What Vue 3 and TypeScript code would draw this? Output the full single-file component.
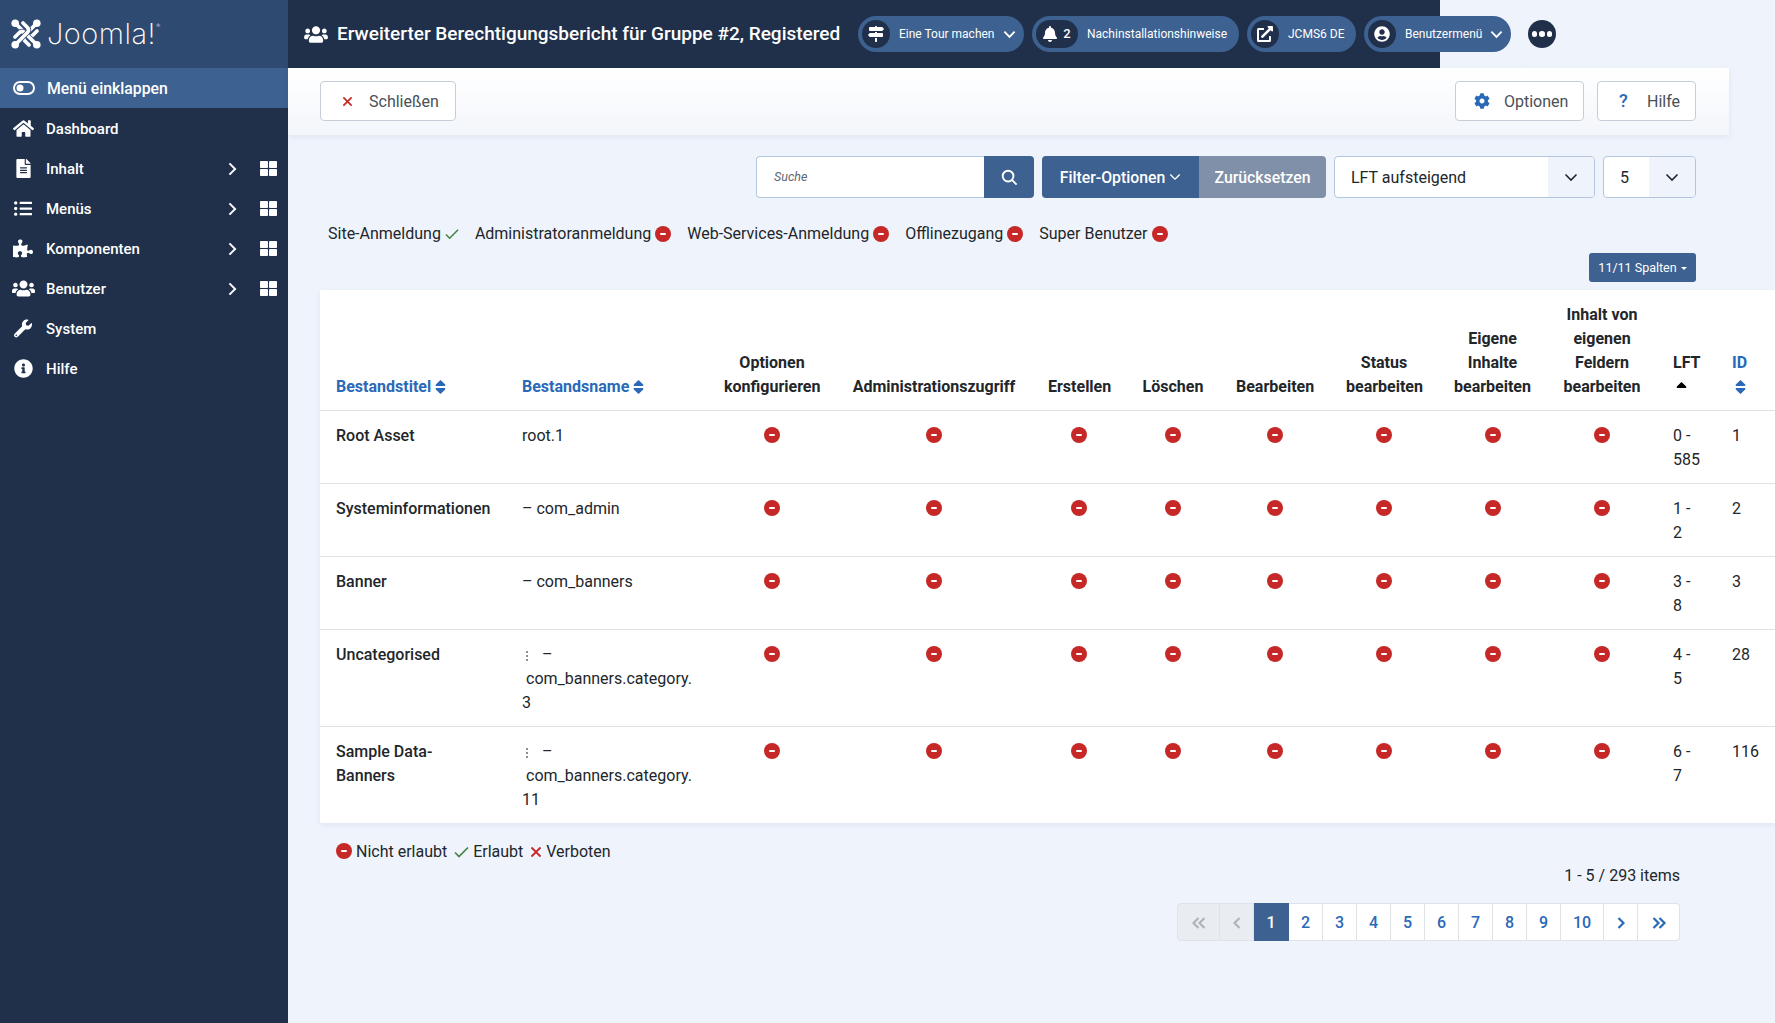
<script setup lang="ts">
const P = {
  users: 'M96 224c35.3 0 64-28.7 64-64s-28.7-64-64-64-64 28.7-64 64 28.7 64 64 64zm448 0c35.3 0 64-28.7 64-64s-28.7-64-64-64-64 28.7-64 64 28.7 64 64 64zm32 32h-64c-17.6 0-33.5 7.1-45.1 18.6 40.3 22.1 68.9 62 75.1 109.4h66c17.7 0 32-14.3 32-32v-32c0-35.3-28.7-64-64-64zm-256 0c61.9 0 112-50.1 112-112S381.9 32 320 32 208 82.1 208 144s50.1 112 112 112zm76.8 32h-8.3c-20.8 10-43.9 16-68.5 16s-47.6-6-68.5-16h-8.3C179.6 288 128 339.6 128 403.2V432c0 26.5 21.5 48 48 48h288c26.5 0 48-21.5 48-48v-28.8c0-63.6-51.6-115.2-115.2-115.2zm-223.7-13.4C161.5 263.1 145.6 256 128 256H64c-35.3 0-64 28.7-64 64v32c0 17.7 14.3 32 32 32h65.9c6.3-47.4 34.9-87.3 75.2-109.4z',
  home: 'M280.37 148.26L96 300.11V464a16 16 0 0 0 16 16l112.06-.29a16 16 0 0 0 15.92-16V368a16 16 0 0 1 16-16h64a16 16 0 0 1 16 16v95.64a16 16 0 0 0 16 16.05L464 480a16 16 0 0 0 16-16V300L295.67 148.26a12.19 12.19 0 0 0-15.3 0zM571.6 251.47L488 182.56V44.05a12 12 0 0 0-12-12h-56a12 12 0 0 0-12 12v72.61L318.47 43a48 48 0 0 0-61 0L4.34 251.47a12 12 0 0 0-1.6 16.9l25.5 31A12 12 0 0 0 45.15 301l235.22-193.74a12.19 12.19 0 0 1 15.3 0L530.9 301a12 12 0 0 0 16.9-1.6l25.5-31a12 12 0 0 0-1.7-16.93z',
  file: 'M224 136V0H24C10.7 0 0 10.7 0 24v464c0 13.3 10.7 24 24 24h336c13.3 0 24-10.7 24-24V160H248c-13.2 0-24-10.8-24-24zm64 236c0 6.6-5.4 12-12 12H108c-6.6 0-12-5.4-12-12v-8c0-6.6 5.4-12 12-12h168c6.6 0 12 5.4 12 12v8zm0-64c0 6.6-5.4 12-12 12H108c-6.6 0-12-5.4-12-12v-8c0-6.6 5.4-12 12-12h168c6.6 0 12 5.4 12 12v8zm0-72v8c0 6.6-5.4 12-12 12H108c-6.6 0-12-5.4-12-12v-8c0-6.6 5.4-12 12-12h168c6.6 0 12 5.4 12 12zm96-114.1v6.1H256V0h6.1c6.4 0 12.5 2.5 17 7l97.9 98c4.5 4.5 7 10.6 7 16.9z',
  list: 'M48 48a48 48 0 1 0 48 48 48 48 0 0 0-48-48zm0 160a48 48 0 1 0 48 48 48 48 0 0 0-48-48zm0 160a48 48 0 1 0 48 48 48 48 0 0 0-48-48zm448 16H176a16 16 0 0 0-16 16v32a16 16 0 0 0 16 16h320a16 16 0 0 0 16-16v-32a16 16 0 0 0-16-16zm0-320H176a16 16 0 0 0-16 16v32a16 16 0 0 0 16 16h320a16 16 0 0 0 16-16V80a16 16 0 0 0-16-16zm0 160H176a16 16 0 0 0-16 16v32a16 16 0 0 0 16 16h320a16 16 0 0 0 16-16v-32a16 16 0 0 0-16-16z',
  puzzle: 'M519.442 288.651c-41.519 0-59.5 31.593-82.058 31.593C377.409 320.244 432 144 432 144s-196.288 80-196.288-3.297c0-35.827 36.288-46.25 36.288-85.985C272 19.216 243.885 0 210.539 0c-34.654 0-66.366 18.891-66.366 56.346 0 41.364 31.711 59.277 31.711 81.75C175.885 207.719 0 166.758 0 166.758v333.237s178.635 41.047 178.635-28.662c0-22.473-40-40.107-40-81.471 0-37.456 29.25-56.346 63.577-56.346 33.673 0 61.788 19.216 61.788 54.717 0 39.735-36.288 50.158-36.288 85.985 0 60.803 129.675 25.73 181.23 25.73 0 0-34.725-120.101 25.827-120.101 35.962 0 46.423 36.152 86.308 36.152C556.712 416 576 387.99 576 354.443c0-34.199-18.962-65.792-56.558-65.792z',
  wrench: 'M507.73 109.1c-2.24-9.03-13.54-12.09-20.12-5.51l-74.36 74.36-67.88-11.31-11.31-67.88 74.36-74.36c6.62-6.62 3.43-17.9-5.66-20.16-47.38-11.74-99.55.91-136.58 37.93-39.64 39.64-50.55 97.1-34.05 147.2L18.74 402.76c-24.99 24.99-24.99 65.51 0 90.5 24.99 24.99 65.51 24.99 90.5 0l213.21-213.21c50.12 16.71 107.47 5.68 147.37-34.22 37.07-37.07 49.7-89.32 37.91-136.73zM64 472c-13.25 0-24-10.75-24-24 0-13.26 10.75-24 24-24s24 10.74 24 24c0 13.25-10.75 24-24 24z',
  info: 'M256 8C119.043 8 8 119.083 8 256c0 136.997 111.043 248 248 248s248-111.003 248-248C504 119.083 392.957 8 256 8zm0 110c23.196 0 42 18.804 42 42s-18.804 42-42 42-42-18.804-42-42 18.804-42 42-42zm56 254c0 6.627-5.373 12-12 12h-88c-6.627 0-12-5.373-12-12v-24c0-6.627 5.373-12 12-12h12v-64h-12c-6.627 0-12-5.373-12-12v-24c0-6.627 5.373-12 12-12h64c6.627 0 12 5.373 12 12v100h12c6.627 0 12 5.373 12 12v24z',
  grid: 'M296 32h192c13.255 0 24 10.745 24 24v160c0 13.255-10.745 24-24 24H296c-13.255 0-24-10.745-24-24V56c0-13.255 10.745-24 24-24zm-80 0H24C10.745 32 0 42.745 0 56v160c0 13.255 10.745 24 24 24h192c13.255 0 24-10.745 24-24V56c0-13.255-10.745-24-24-24zM0 296v160c0 13.255 10.745 24 24 24h192c13.255 0 24-10.745 24-24V296c0-13.255-10.745-24-24-24H24c-13.255 0-24 10.745-24 24zm296 184h192c13.255 0 24-10.745 24-24V296c0-13.255-10.745-24-24-24H296c-13.255 0-24 10.745-24 24v160c0 13.255 10.745 24 24 24z',
  signs: 'M507.31 84.69L464 41.37c-6-6-14.14-9.37-22.63-9.37H288V16c0-8.84-7.16-16-16-16h-32c-8.84 0-16 7.16-16 16v16H56c-13.25 0-24 10.75-24 24v80c0 13.25 10.75 24 24 24h385.37c8.49 0 16.62-3.37 22.63-9.37l43.31-43.31c6.25-6.26 6.25-16.38 0-22.63zM224 496c0 8.84 7.16 16 16 16h32c8.84 0 16-7.16 16-16V384h-64v112zm232-272H288v-32h-64v32H70.63c-8.49 0-16.62 3.37-22.63 9.37L4.69 276.69c-6.25 6.25-6.25 16.38 0 22.63L48 342.63c6 6 14.14 9.37 22.63 9.37H456c13.25 0 24-10.75 24-24v-80c0-13.25-10.75-24-24-24z',
  bell: 'M224 512c35.32 0 63.97-28.65 63.97-64H160.03c0 35.35 28.65 64 63.97 64zm215.39-149.71c-19.32-20.76-55.47-51.99-55.47-154.29 0-77.7-54.48-139.9-127.94-155.16V32c0-17.67-14.32-32-31.98-32s-31.98 14.33-31.98 32v20.84C118.56 68.1 64.08 130.3 64.08 208c0 102.3-36.15 133.53-55.47 154.29-6 6.45-8.66 14.16-8.61 21.71.11 16.4 12.98 32 32.1 32h383.8c19.12 0 32-15.6 32.1-32 .05-7.55-2.61-15.27-8.61-21.71z',
  external: 'M432,320H400a16,16,0,0,0-16,16V448H64V128H208a16,16,0,0,0,16-16V80a16,16,0,0,0-16-16H48A48,48,0,0,0,0,112V464a48,48,0,0,0,48,48H400a48,48,0,0,0,48-48V336A16,16,0,0,0,432,320ZM488,0h-128c-21.37,0-32.05,25.91-17,41l35.73,35.73L135,320.37a24,24,0,0,0,0,34L157.67,377a24,24,0,0,0,34,0L435.28,133.32,471,169c15,15,41,4.5,41-17V24A24,24,0,0,0,488,0Z',
  user: 'M248 8C111 8 0 119 0 256s111 248 248 248 248-111 248-248S385 8 248 8zm0 96c48.6 0 88 39.4 88 88s-39.4 88-88 88-88-39.4-88-88 39.4-88 88-88zm0 344c-58.7 0-111.3-26.6-146.5-68.2 18.8-35.4 55.6-59.8 98.5-59.8 2.4 0 4.8.4 7.1 1.1 13 4.2 26.6 6.9 40.9 6.9 14.3 0 28-2.7 40.9-6.9 2.3-.7 4.7-1.1 7.1-1.1 42.9 0 79.7 24.4 98.5 59.8C359.3 421.4 306.7 448 248 448z',
  cog: 'M487.4 315.7l-42.6-24.6c4.3-23.2 4.3-47 0-70.2l42.6-24.6c4.9-2.8 7.1-8.6 5.5-14-11.1-35.6-30-67.8-54.7-94.6-3.8-4.1-10-5.1-14.8-2.3L380.8 110c-17.9-15.4-38.5-27.3-60.8-35.1V25.8c0-5.6-3.9-10.5-9.4-11.7-36.7-8.2-74.3-7.8-109.2 0-5.5 1.2-9.4 6.1-9.4 11.7V75c-22.2 7.9-42.8 19.8-60.8 35.1L88.7 85.5c-4.9-2.8-11-1.9-14.8 2.3-24.7 26.7-43.6 58.9-54.7 94.6-1.7 5.4.6 11.2 5.5 14L67.3 221c-4.3 23.2-4.3 47 0 70.2l-42.6 24.6c-4.9 2.8-7.1 8.6-5.5 14 11.1 35.6 30 67.8 54.7 94.6 3.8 4.1 10 5.1 14.8 2.3l42.6-24.6c17.9 15.4 38.5 27.3 60.8 35.1v49.2c0 5.6 3.9 10.5 9.4 11.7 36.7 8.2 74.3 7.8 109.2 0 5.5-1.2 9.4-6.1 9.4-11.7v-49.2c22.2-7.9 42.8-19.8 60.8-35.1l42.6 24.6c4.9 2.8 11 1.9 14.8-2.3 24.7-26.7 43.6-58.9 54.7-94.6 1.5-5.5-.7-11.3-5.6-14.1zM256 336c-44.1 0-80-35.9-80-80s35.9-80 80-80 80 35.9 80 80-35.9 80-80 80z',
  sort: 'M41 288h238c21.4 0 32.1 25.9 17 41L177 448c-9.4 9.4-24.6 9.4-33.9 0L24 329c-15.1-15.1-4.4-41 17-41zm255-105L177 64c-9.4-9.4-24.6-9.4-33.9 0L24 183c-15.1 15.1-4.4 41 17 41h238c21.4 0 32.1-25.9 17-41z',
  sortUp: 'M279 224H41c-21.4 0-32.1-25.9-17-41L143 64c9.4-9.4 24.6-9.4 33.9 0l119 119c15.2 15.1 4.5 41-16.9 41z',
}

interface MenuItem {
  label: string
  path: string
  vb: string
  w: number
  sub: boolean
}

const menu: MenuItem[] = [
  { label: 'Dashboard', path: P.home, vb: '0 0 576 512', w: 21, sub: false },
  { label: 'Inhalt', path: P.file, vb: '0 0 384 512', w: 15, sub: true },
  { label: 'Menüs', path: P.list, vb: '0 0 512 512', w: 18, sub: true },
  { label: 'Komponenten', path: P.puzzle, vb: '0 0 576 512', w: 20, sub: true },
  { label: 'Benutzer', path: P.users, vb: '0 0 640 512', w: 23, sub: true },
  { label: 'System', path: P.wrench, vb: '0 0 512 512', w: 18, sub: false },
  { label: 'Hilfe', path: P.info, vb: '0 0 512 512', w: 19, sub: false },
]

const statuses = [
  { label: 'Site-Anmeldung', ok: true },
  { label: 'Administratoranmeldung', ok: false },
  { label: 'Web-Services-Anmeldung', ok: false },
  { label: 'Offlinezugang', ok: false },
  { label: 'Super Benutzer', ok: false },
]

const colWidths = [186, 202, 128, 196, 94, 94, 110, 108, 109, 110, 59, 59]
const actionHeads = [
  'Optionen konfigurieren',
  'Administrationszugriff',
  'Erstellen',
  'Löschen',
  'Bearbeiten',
  'Status bearbeiten',
  'Eigene Inhalte bearbeiten',
  'Inhalt von eigenen Feldern bearbeiten',
]

interface Row {
  title: string
  name: string
  nested: boolean
  lft: string
  id: number
}

const rows: Row[] = [
  { title: 'Root Asset', name: 'root.1', nested: false, lft: '0 - 585', id: 1 },
  { title: 'Systeminformationen', name: '– com_admin', nested: false, lft: '1 - 2', id: 2 },
  { title: 'Banner', name: '– com_banners', nested: false, lft: '3 - 8', id: 3 },
  { title: 'Uncategorised', name: 'com_banners.category.3', nested: true, lft: '4 - 5', id: 28 },
  { title: 'Sample Data-Banners', name: 'com_banners.category.11', nested: true, lft: '6 - 7', id: 116 },
]

const pages = ['1', '2', '3', '4', '5', '6', '7', '8', '9', '10']

const logoArm = 'M4.500 4.500 L16 16 Q19 19 22 16 L26 12'
</script>

<template>
  <div class="page">
    <aside class="sidebar">
      <div class="logo">
        <svg class="logo-mark" viewBox="0 0 30 30" fill="none" stroke-linecap="round">
          <g v-for="a in [0, 90, 180, 270]" :key="a" :transform="`rotate(${a} 15 15)`">
            <path :d="logoArm" stroke="#2e4a70" stroke-width="5.200" />
            <path :d="logoArm" stroke="#fff" stroke-width="3.800" />
            <circle cx="4.200" cy="4.200" r="3.800" fill="#fff" />
          </g>
        </svg>
        <span class="wordmark">Joomla!<sup>®</sup></span>
      </div>
      <div class="collapse-row">
        <svg class="collapse-icon" viewBox="0 0 22 14">
          <rect x="1" y="1" width="20" height="12" rx="6" />
          <circle cx="7" cy="7" r="3.500" />
        </svg>
        <span>Menü einklappen</span>
      </div>
      <nav>
        <div v-for="item in menu" :key="item.label" class="menu-row">
          <span class="menu-icon">
            <svg :viewBox="item.vb" :width="item.w" height="19"><path :d="item.path" /></svg>
          </span>
          <span class="menu-label">{{ item.label }}</span>
          <template v-if="item.sub">
            <svg class="menu-chevron" viewBox="0 0 10 16"><path d="M1.500 1.500 8 8l-6.500 6.500" /></svg>
            <svg class="menu-grid" viewBox="0 0 512 512"><path :d="P.grid" /></svg>
          </template>
        </div>
      </nav>
    </aside>

    <main class="main">
      <header class="topbar">
        <div class="title">
          <svg viewBox="0 0 640 512" width="24" height="19"><path :d="P.users" /></svg>
          <h1>Erweiterter Berechtigungsbericht für Gruppe #2, Registered</h1>
        </div>
        <div class="pills">
          <div class="pill pill-tour">
            <span class="pill-icon"><svg viewBox="0 0 512 512" width="16" height="16"><path :d="P.signs" /></svg></span>
            <span class="pill-text">Eine Tour machen</span>
            <svg class="pill-chevron" viewBox="0 0 14 9"><path d="M1.500 1.500 7 7l5.500-5.500" /></svg>
          </div>
          <div class="pill pill-post">
            <span class="pill-icon pill-icon-wide">
              <svg viewBox="0 0 448 512" width="14" height="16"><path :d="P.bell" /></svg>
              <b>2</b>
            </span>
            <span class="pill-text">Nachinstallationshinweise</span>
          </div>
          <div class="pill pill-site">
            <span class="pill-icon"><svg viewBox="0 0 512 512" width="16" height="16"><path :d="P.external" /></svg></span>
            <span class="pill-text">JCMS6 DE</span>
          </div>
          <div class="pill pill-user">
            <span class="pill-icon"><svg viewBox="0 0 496 512" width="16" height="16"><path :d="P.user" /></svg></span>
            <span class="pill-text">Benutzermenü</span>
            <svg class="pill-chevron" viewBox="0 0 14 9"><path d="M1.500 1.500 7 7l5.500-5.500" /></svg>
          </div>
          <span class="more"><i></i><i></i><i></i></span>
        </div>
      </header>

      <div class="toolbar">
        <button class="tool-btn close-btn">
          <svg viewBox="0 0 12 12" width="11" height="11"><path d="M1.500 1.500l9 9m0-9l-9 9" /></svg>
          <span>Schließen</span>
        </button>
        <div class="tool-right">
          <button class="tool-btn opt-btn">
            <svg viewBox="0 0 512 512" width="16" height="16"><path :d="P.cog" /></svg>
            <span>Optionen</span>
          </button>
          <button class="tool-btn help-btn"><span class="q">?</span><span>Hilfe</span></button>
        </div>
      </div>

      <div class="content">
        <div class="filters">
          <div class="search">
            <input type="text" placeholder="Suche" />
            <button aria-label="Suche">
              <svg viewBox="0 0 18 18" width="17" height="17"><circle cx="7.500" cy="7.500" r="5.700" /><path d="M11.800 11.800 16.500 16.500" /></svg>
            </button>
          </div>
          <div class="filter-group">
            <button class="btn-filter"><span>Filter-Optionen</span><svg viewBox="0 0 14 9" width="12" height="8"><path d="M1.500 1.500 7 7l5.500-5.500" /></svg></button>
            <button class="btn-reset"><span>Zurücksetzen</span></button>
          </div>
          <div class="select select-order">
            <span>LFT aufsteigend</span>
            <i><svg viewBox="0 0 14 9" width="14" height="9"><path d="M1.500 1.500 7 7l5.500-5.500" /></svg></i>
          </div>
          <div class="select select-limit">
            <span>5</span>
            <i><svg viewBox="0 0 14 9" width="14" height="9"><path d="M1.500 1.500 7 7l5.500-5.500" /></svg></i>
          </div>
        </div>

        <div class="status">
          <span v-for="s in statuses" :key="s.label" class="status-item">
            {{ s.label }}
            <svg v-if="s.ok" class="ic-check" viewBox="0 0 15 12" width="14" height="12"><path d="M1 6.500 5 10.500 14 1.500" /></svg>
            <span v-else class="ic-deny"></span>
          </span>
        </div>

        <div class="cols-row"><button class="cols-btn">11/11 Spalten<i></i></button></div>

        <table class="report">
          <colgroup>
            <col v-for="(w, i) in colWidths" :key="i" :style="{ width: w + 'px' }" />
          </colgroup>
          <thead>
            <tr>
              <th class="link">Bestandstitel <svg class="sort" viewBox="0 0 320 512"><path :d="P.sort" /></svg></th>
              <th class="link">Bestandsname <svg class="sort" viewBox="0 0 320 512"><path :d="P.sort" /></svg></th>
              <th v-for="h in actionHeads" :key="h" class="center">{{ h }}</th>
              <th>LFT<br /><svg class="sort sort-block sort-up" viewBox="0 0 320 512"><path :d="P.sortUp" /></svg></th>
              <th class="link">ID<br /><svg class="sort sort-block" viewBox="0 0 320 512"><path :d="P.sort" /></svg></th>
            </tr>
          </thead>
          <tbody>
            <tr v-for="r in rows" :key="r.id">
              <td class="row-title">{{ r.title }}</td>
              <td v-if="r.nested" class="row-nested">
                <span class="dots"></span><span class="dash">–</span><br />
                <span class="nested-name">{{ r.name.slice(0, 21) }}</span><br />{{ r.name.slice(21) }}
              </td>
              <td v-else>{{ r.name }}</td>
              <td v-for="h in actionHeads" :key="h" class="center"><span class="ic-deny"></span></td>
              <td>{{ r.lft }}</td>
              <td>{{ r.id }}</td>
            </tr>
          </tbody>
        </table>

        <div class="legend">
          <span class="ic-deny"></span> Nicht erlaubt
          <svg class="ic-check" viewBox="0 0 15 12" width="15" height="12"><path d="M1 6.500 5 10.500 14 1.500" /></svg> Erlaubt
          <svg class="ic-x" viewBox="0 0 12 12" width="12" height="12"><path d="M1.500 1.500l9 9m0-9l-9 9" /></svg> Verboten
        </div>

        <div class="items">1 - 5 / 293 items</div>

        <div class="pager">
          <span class="pg pg-off pg-first"><svg viewBox="0 0 16 12" width="16" height="12"><path d="M7.500 1 2.500 6l5 5M13.500 1l-5 5 5 5" /></svg></span>
          <span class="pg pg-off"><svg viewBox="0 0 8 12" width="8" height="12"><path d="M6.500 1 1.500 6l5 5" /></svg></span>
          <span v-for="(n, i) in pages" :key="n" class="pg" :class="{ 'pg-on': i === 0, 'pg-ten': n === '10' }">{{ n }}</span>
          <span class="pg"><svg viewBox="0 0 8 12" width="8" height="12"><path d="M1.500 1l5 5-5 5" /></svg></span>
          <span class="pg pg-wide"><svg viewBox="0 0 16 12" width="16" height="12"><path d="M2.500 1l5 5-5 5M8.500 1l5 5-5 5" /></svg></span>
        </div>
      </div>
    </main>
  </div>
</template>

<style>
html,
body {
  margin: 0;
  height: 100%;
  overflow: hidden;
  background: #eff4fc;
}
</style>

<style scoped>
.page {
  display: flex;
  min-height: 1023px;
  font-family: Roboto, "Liberation Sans", sans-serif;
  font-size: 16px;
  line-height: 24px;
  color: #22262a;
}

.sidebar {
  width: 288px;
  flex: none;
  background: #20304a;
  color: #fff;
}

.logo {
  height: 68px;
  background: #2e4a70;
  display: flex;
  align-items: center;
  padding-left: 11px;
  box-sizing: border-box;
}

.logo-mark {
  width: 30px;
  height: 30px;
  flex: none;
}

.wordmark {
  font-family: Inter, sans-serif;
  font-weight: 200;
  font-size: 29px;
  letter-spacing: 0.5px;
  margin-left: 6px;
}

.wordmark sup {
  font-size: 6px;
  line-height: 0;
  vertical-align: 16px;
}

.collapse-row {
  height: 40px;
  background: #3d6190;
  display: flex;
  align-items: center;
  padding: 2px 0 0 13px;
  box-sizing: border-box;
  font-size: 15.800px;
  font-weight: 500;
}

.collapse-icon {
  width: 22px;
  height: 14px;
  margin: -2px 12px 0 0;
}

.collapse-icon rect {
  fill: none;
  stroke: #fff;
  stroke-width: 2;
}

.collapse-icon circle {
  fill: #fff;
}

.menu-row {
  height: 40px;
  display: flex;
  align-items: center;
  box-sizing: border-box;
  padding-top: 1px;
  font-size: 15px;
  font-weight: 500;
}

.menu-icon {
  width: 46px;
  display: flex;
  justify-content: center;
}

.menu-icon svg {
  fill: #fff;
}

.menu-label {
  flex: 1;
}

.menu-chevron {
  width: 9px;
  height: 14px;
  fill: none;
  stroke: #fff;
  stroke-width: 2.200;
  margin-right: 23px;
}

.menu-grid {
  width: 17px;
  height: 17px;
  fill: #fff;
  margin-right: 11px;
}

.main {
  width: 1441px;
  flex: none;
}

.topbar {
  width: 1152px;
  height: 68px;
  background: #20304a;
  color: #fff;
  display: flex;
  align-items: center;
  white-space: nowrap;
}

.title {
  display: flex;
  align-items: center;
  margin-left: 16px;
  width: 554px;
  flex: none;
}

.title svg {
  fill: #fff;
  margin-right: 9px;
  flex: none;
}

.title h1 {
  margin: 0;
  font-size: 19px;
  font-weight: 500;
}

.pills {
  display: flex;
  align-items: center;
  gap: 8px;
  flex: none;
}

.pill {
  height: 36px;
  border-radius: 18px;
  background: #3d6190;
  display: flex;
  align-items: center;
  padding-left: 4px;
  box-sizing: border-box;
  font-size: 12px;
}

.pill-tour { width: 166px; }
.pill-post { width: 207px; }
.pill-site { width: 109px; }
.pill-user { width: 147px; }

.pill-icon {
  width: 28px;
  height: 28px;
  border-radius: 14px;
  background: #20304a;
  display: flex;
  align-items: center;
  justify-content: center;
  flex: none;
  margin-right: 9px;
}

.pill-icon svg {
  fill: #fff;
}

.pill-icon-wide {
  width: 42px;
  gap: 6px;
  margin-right: 9px;
}

.pill-icon-wide b {
  font-weight: 500;
  font-size: 13px;
}

.pill-text {
  flex: 1;
}

.pill-chevron {
  width: 13px;
  height: 9px;
  fill: none;
  stroke: #fff;
  stroke-width: 2;
  margin-right: 8px;
}

.more {
  width: 28px;
  height: 28px;
  border-radius: 50%;
  background: #20304a;
  margin-left: 9px;
  display: flex;
  align-items: center;
  justify-content: center;
  gap: 2px;
}

.more i {
  width: 5.500px;
  height: 5.500px;
  border-radius: 50%;
  background: #fff;
}

.toolbar {
  height: 67px;
  box-sizing: border-box;
  padding: 13px 33px 0 32px;
  display: flex;
  justify-content: space-between;
  background: linear-gradient(#fff, #f3f6fb);
  box-shadow: 0 2px 6px rgba(40, 60, 100, 0.08);
}

.tool-right {
  display: flex;
  gap: 13px;
}

.tool-btn {
  height: 40px;
  border: 1px solid #c7ced9;
  border-radius: 4px;
  background: #fff;
  font: inherit;
  color: #495057;
  display: flex;
  align-items: center;
  box-sizing: border-box;
  padding: 0;
}

.tool-btn span:last-child {
  padding-top: 2px;
}

.close-btn {
  width: 136px;
  padding-left: 21px;
  gap: 16px;
}

.close-btn svg {
  fill: none;
  stroke: #c52827;
  stroke-width: 1.800;
}

.opt-btn {
  width: 129px;
  padding-left: 18px;
  gap: 14px;
}

.opt-btn svg {
  fill: #2a69b8;
}

.help-btn {
  width: 99px;
  padding-left: 21px;
}

.q {
  width: 28px;
  color: #2a69b8;
  font-size: 18px;
  font-weight: 500;
  text-align: left;
}

.content {
  padding: 21px 33px 0 32px;
}

.filters {
  display: flex;
  justify-content: flex-end;
  gap: 8px;
}

.search {
  display: flex;
  width: 278px;
  height: 42px;
}

.search input {
  flex: 1;
  min-width: 0;
  box-sizing: border-box;
  border: 1px solid #b4c6de;
  border-right: 0;
  border-radius: 4px 0 0 4px;
  padding: 0 16px 2px 17px;
  font: italic 12.500px Roboto, sans-serif;
  background: #fff;
}

.search input::placeholder {
  color: #5f6670;
}

.search button {
  width: 50px;
  border: 0;
  border-radius: 0 4px 4px 0;
  background: #3d6190;
  display: flex;
  align-items: center;
  justify-content: center;
  padding: 0;
}

.search svg {
  fill: none;
  stroke: #fff;
  stroke-width: 2;
}

.filter-group {
  display: flex;
  height: 42px;
}

.filter-group button {
  border: 0;
  color: #fff;
  font: inherit;
  font-size: 15.800px;
  font-weight: 500;
  padding: 0;
  display: flex;
  align-items: center;
  justify-content: center;
}

.filter-group span {
  padding-top: 1px;
}

.btn-filter {
  width: 157px;
  background: #3d6190;
  border-radius: 4px 0 0 4px;
  gap: 4px;
}

.btn-filter svg {
  fill: none;
  stroke: #fff;
  stroke-width: 1.600;
}

.btn-reset {
  width: 127px;
  background: #8090a8;
  border-radius: 0 4px 4px 0;
}

.select {
  height: 42px;
  box-sizing: border-box;
  border: 1px solid #b4c6de;
  border-radius: 4px;
  background: #fff;
  display: flex;
  overflow: hidden;
}

.select span {
  flex: 1;
  line-height: 42px;
  padding-left: 16px;
}

.select i {
  background: #eff4fc;
  display: flex;
  align-items: center;
  justify-content: center;
}

.select svg {
  fill: none;
  stroke: #22262a;
  stroke-width: 1.600;
}

.select-order { width: 261px; }
.select-order i { width: 46px; }
.select-limit { width: 93px; }
.select-limit i { width: 46px; }

.status {
  display: flex;
  gap: 16px;
  padding: 24px 0 0 8px;
  height: 23px;
}

.status-item {
  display: flex;
  align-items: center;
  gap: 4px;
}

.cols-row {
  display: flex;
  justify-content: flex-end;
  margin-top: 8px;
}

.cols-btn {
  width: 107px;
  height: 29px;
  border: 0;
  border-radius: 3px;
  background: #3d6190;
  color: #fff;
  font: 400 12.500px Roboto, sans-serif;
  padding: 0;
}

.cols-btn i {
  display: inline-block;
  border: 3px solid transparent;
  border-top-color: #fff;
  border-bottom: 0;
  margin-left: 4px;
  vertical-align: 2px;
}

.report {
  width: 1455px;
  table-layout: fixed;
  border-collapse: collapse;
  background: #fff;
  margin-top: 8px;
  box-shadow: 0 2px 6px rgba(40, 60, 100, 0.08);
}

.report th,
.report td {
  padding: 13px 16px 11px;
  text-align: left;
  vertical-align: top;
  border-bottom: 1px solid #dfe3e7;
}

.report th {
  vertical-align: bottom;
  font-weight: 700;
}

.report tbody tr:last-child td {
  border-bottom: 0;
}

.report .center {
  text-align: center;
}

.report .link {
  color: #2a69b8;
}

.row-title {
  font-weight: 500;
}

.sort {
  width: 11px;
  height: 18px;
  fill: #2a69b8;
  vertical-align: -4px;
}

.sort-block {
  margin-left: 3px;
}

.sort-up {
  fill: #000;
  vertical-align: -6px;
}

.row-nested .dots {
  display: inline-block;
  width: 2px;
  height: 12px;
  margin: 0 14px 0 4px;
  vertical-align: -2px;
  background: radial-gradient(circle, #8a9097 1px, transparent 1px) 0 0 / 2px 4px;
}

.nested-name {
  margin-left: 4px;
}

.ic-deny {
  display: inline-block;
  position: relative;
  width: 16px;
  height: 16px;
  border-radius: 50%;
  background: #c52827;
  vertical-align: -2px;
}

.ic-deny::after {
  content: '';
  position: absolute;
  left: 5px;
  top: 7px;
  width: 6px;
  height: 2px;
  background: #fff;
  border-radius: 1px;
}

.ic-check {
  fill: none;
  stroke: #448344;
  stroke-width: 1.700;
}

.ic-x {
  fill: none;
  stroke: #c52827;
  stroke-width: 1.800;
}

.legend {
  padding: 17px 0 0 16px;
}

.legend svg {
  vertical-align: -1px;
  margin-left: 3px;
}

.items {
  text-align: right;
  margin-top: 0;
  padding-right: 16px;
}

.pager {
  display: flex;
  justify-content: flex-end;
  margin: 15px 16px 0 0;
}

.pg {
  height: 38px;
  width: 34px;
  flex: none;
  box-sizing: border-box;
  border: 1px solid #dfe3e7;
  border-left: 0;
  background: #fff;
  color: #2a69b8;
  font-weight: 500;
  display: flex;
  align-items: center;
  justify-content: center;
  padding: 1px 0 0;
}

.pg svg {
  fill: none;
  stroke: #2a69b8;
  stroke-width: 2.200;
}

.pg:first-child {
  border-left: 1px solid #dfe3e7;
  border-radius: 4px 0 0 4px;
}

.pg:last-child {
  border-radius: 0 4px 4px 0;
}

.pg-wide {
  width: 42px;
}

.pg-first {
  width: 43px;
}

.pg-ten {
  width: 43px;
}

.pg-off {
  background: #e9ecf1;
}

.pg-off svg {
  stroke: #b0b5bb;
}

.pg-on {
  width: 35px;
  background: #3d6190;
  border-color: #3d6190;
  color: #fff;
}
</style>
